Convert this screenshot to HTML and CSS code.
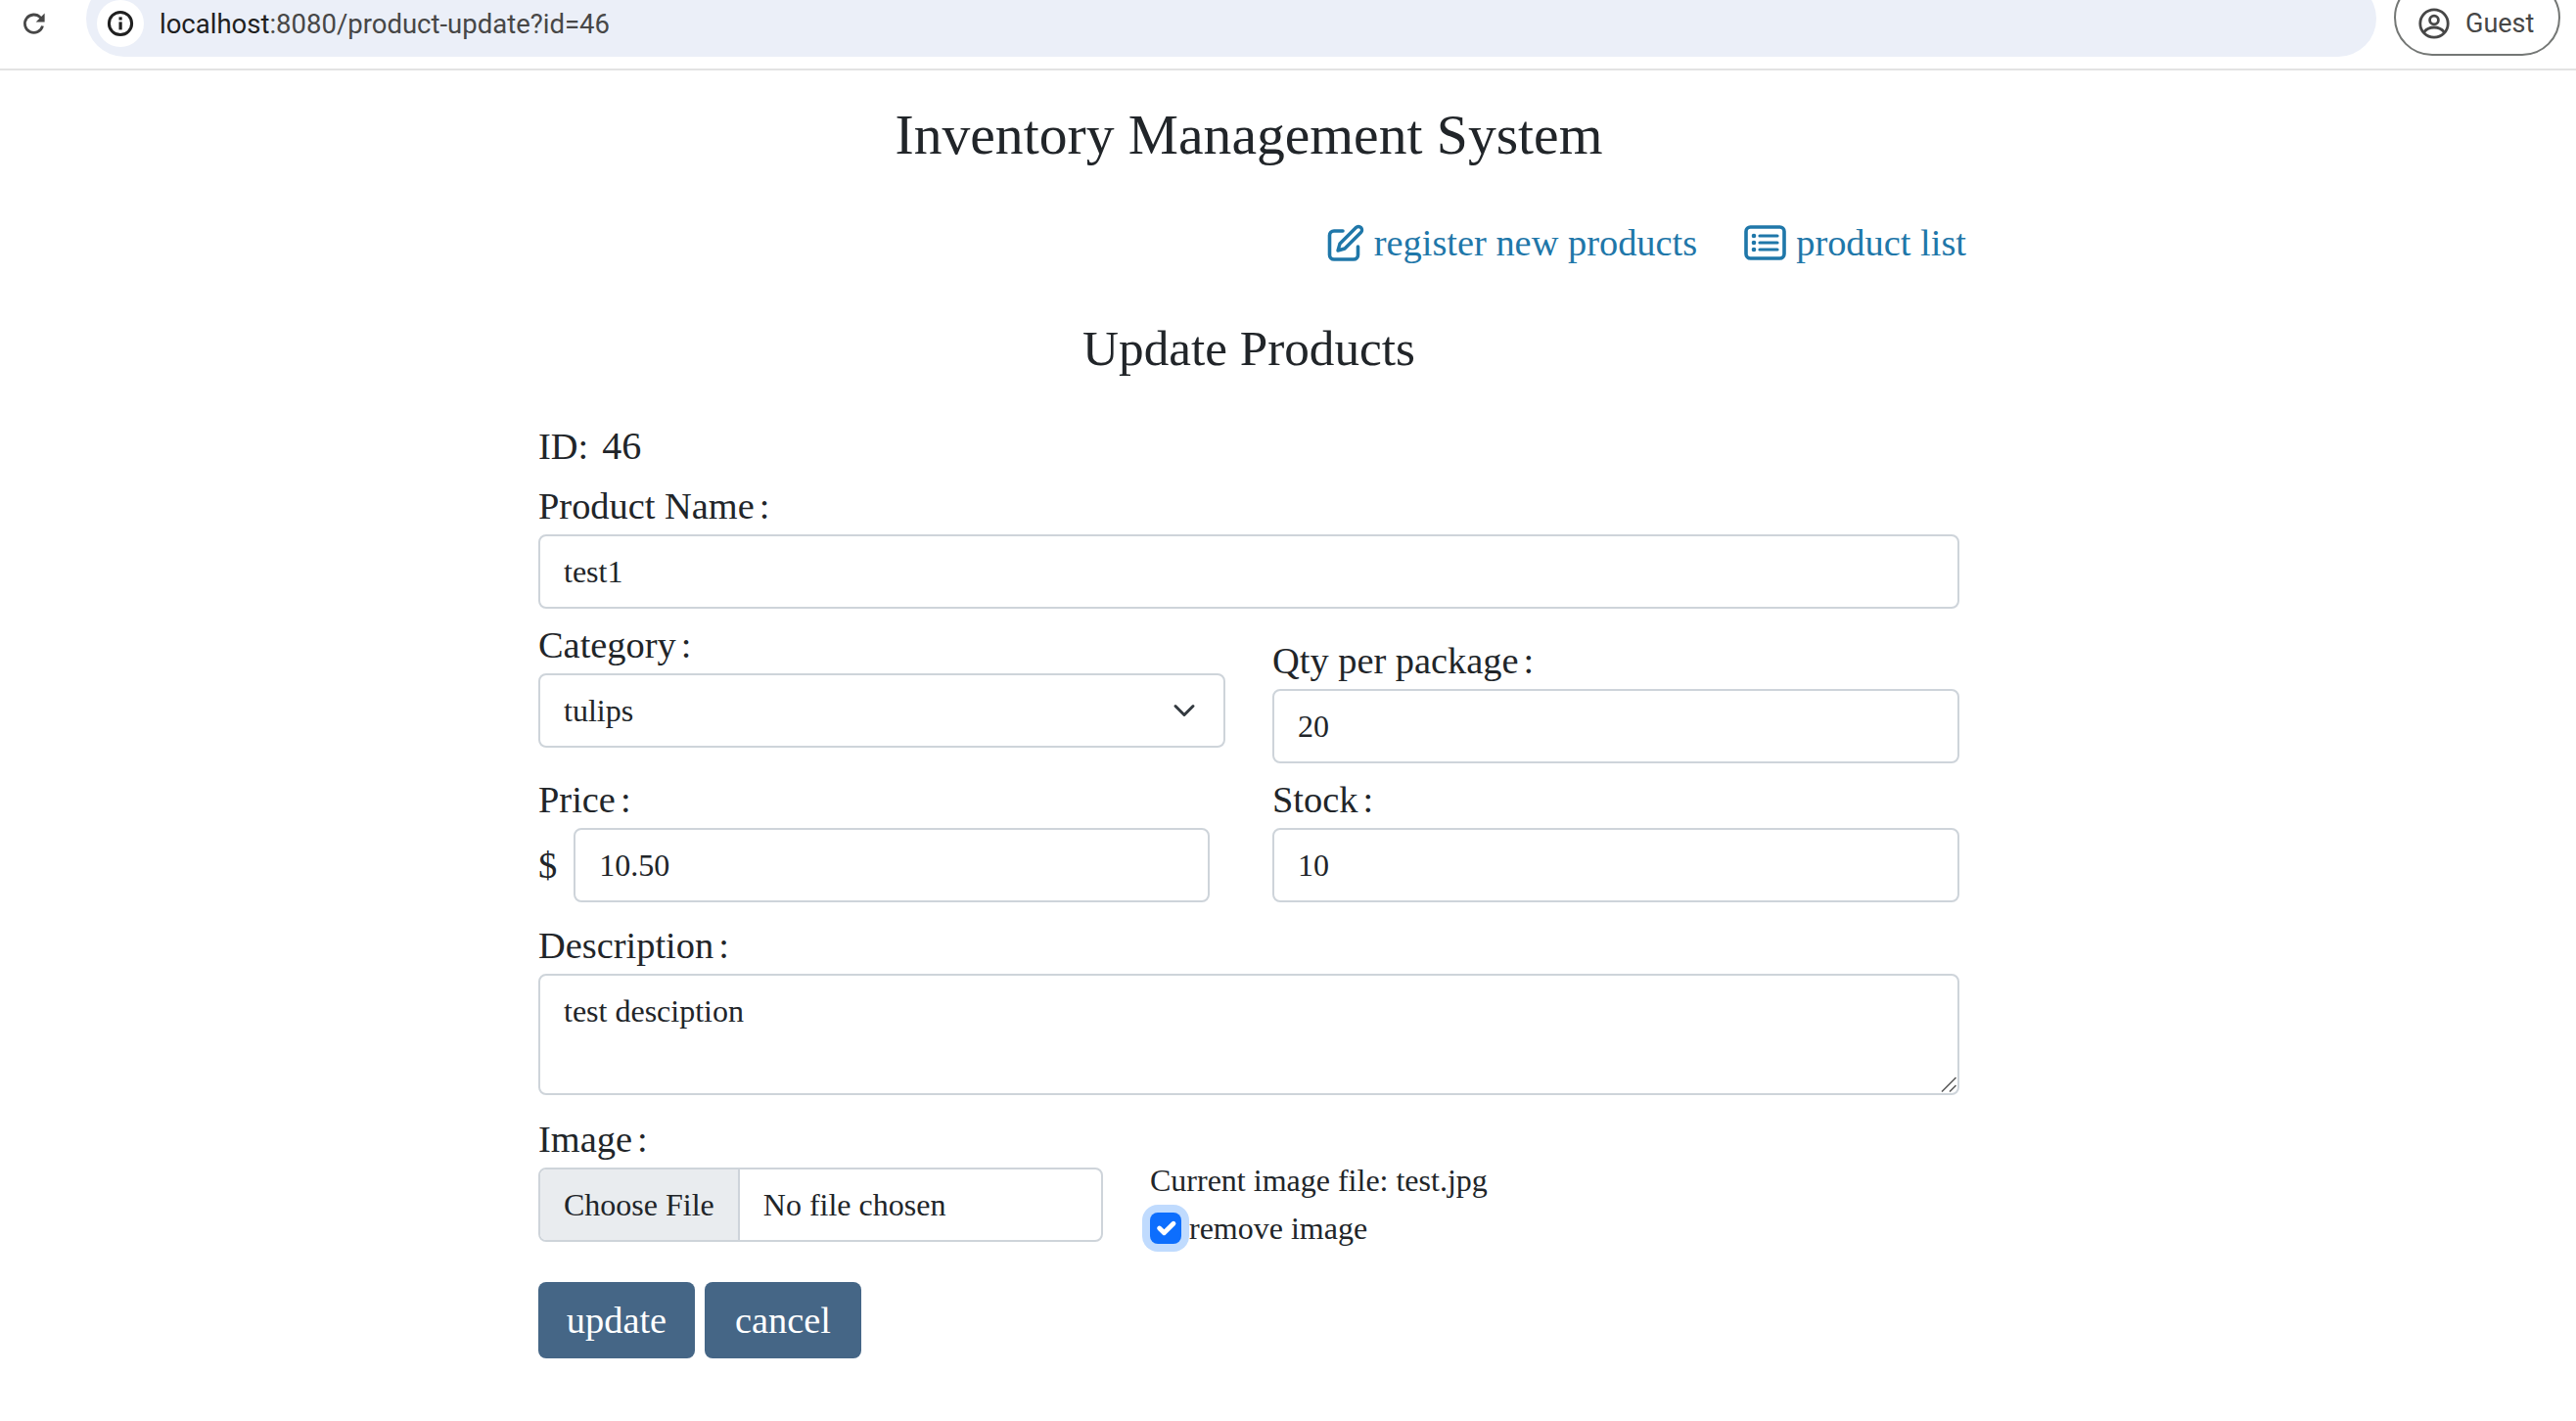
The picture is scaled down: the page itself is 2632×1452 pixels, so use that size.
FILE: index.html
```html
<!DOCTYPE html>
<html lang="en">
<head>
<meta charset="utf-8">
<title>Inventory Management System</title>
<link rel="stylesheet" href="styles.css">
</head>
<body>
<header class="chrome">
  <svg class="reload" viewBox="0 0 26 24" width="26" height="24" aria-hidden="true"><path d="M21.5 14.5a9.2 9.2 0 1 1-2.2-8.6L22 8.6" fill="none" stroke="#474747" stroke-width="2.8"/><path d="M23.6 1.6v9h-9z" fill="#474747"/></svg>
  <div class="omnibox">
    <span class="site-badge">
      <svg viewBox="0 0 28 28" width="28" height="28" aria-hidden="true"><circle cx="14" cy="14" r="11.6" fill="none" stroke="#1f1f1f" stroke-width="3"/><rect x="12.5" y="12.4" width="3.2" height="8" fill="#1f1f1f"/><rect x="12.5" y="7.4" width="3.2" height="3.1" fill="#1f1f1f"/></svg>
    </span>
    <span class="url"><span class="url-host">localhost</span>:8080/product-update?id=46</span>
  </div>
  <div class="guest">
    <svg viewBox="0 0 34 34" width="34" height="34" aria-hidden="true"><circle cx="17" cy="17" r="14.2" fill="none" stroke="#474747" stroke-width="2.8"/><circle cx="17" cy="13.5" r="4.4" fill="none" stroke="#474747" stroke-width="2.8"/><path d="M6.5 26c3-3.800 6.500-5 10.500-5s7.500 1.200 10.500 5" fill="none" stroke="#474747" stroke-width="2.8"/></svg>
    <span>Guest</span>
  </div>
</header>

<main class="container">
  <h1 class="title">Inventory Management System</h1>
  <nav class="links">
    <a class="link" href="#">
      <svg viewBox="0 0 38 38" width="38" height="38" aria-hidden="true"><path d="M16 7H7a4.500 4.500 0 0 0-4.500 4.500v20A4.500 4.500 0 0 0 7 36h20a4.500 4.500 0 0 0 4.500-4.500V23" fill="none" stroke="currentColor" stroke-width="3.600" stroke-linecap="round"/><path d="M29.500 3.500a3.500 3.500 0 0 1 5 0 3.500 3.500 0 0 1 0 5L18 25l-7 2 2-7z" fill="none" stroke="currentColor" stroke-width="3.400" stroke-linejoin="round"/></svg>
      <span>register new products</span>
    </a>
    <a class="link" href="#">
      <svg viewBox="0 0 43 36" width="43" height="36" aria-hidden="true"><rect x="2" y="2" width="39" height="32" rx="4.500" fill="none" stroke="currentColor" stroke-width="3.600"/><circle cx="10" cy="11" r="2.300" fill="currentColor"/><circle cx="10" cy="18" r="2.300" fill="currentColor"/><circle cx="10" cy="25" r="2.300" fill="currentColor"/><path d="M16 11h18M16 18h18M16 25h18" stroke="currentColor" stroke-width="3.200" stroke-linecap="round"/></svg>
      <span>product list</span>
    </a>
  </nav>
  <h2 class="subtitle">Update Products</h2>

  <form class="form">
    <p class="id-line">ID:<span class="id-value">46</span></p>

    <div class="field">
      <label class="label">Product Name<span class="colon">:</span></label>
      <input class="control" type="text" value="test1">
    </div>

    <div class="row row-spaced">
      <div class="field">
        <label class="label">Category<span class="colon">:</span></label>
        <select class="control select"><option>tulips</option></select>
      </div>
      <div class="field field-offset">
        <label class="label">Qty per package<span class="colon">:</span></label>
        <input class="control" type="text" value="20">
      </div>
    </div>

    <div class="row row-spaced">
      <div class="field">
        <label class="label">Price<span class="colon">:</span></label>
        <div class="price">
          <span class="dollar">$</span>
          <input class="control" type="text" value="10.50">
        </div>
      </div>
      <div class="field">
        <label class="label">Stock<span class="colon">:</span></label>
        <input class="control" type="text" value="10">
      </div>
    </div>

    <div class="field field-gap">
      <label class="label">Description<span class="colon">:</span></label>
      <textarea class="control textarea">test desciption</textarea>
    </div>

    <div class="image-row">
      <div class="field image-field">
        <label class="label">Image<span class="colon">:</span></label>
        <input class="control file" type="file">
      </div>
      <div class="current">
        <div class="current-line">Current image file: test.jpg</div>
        <label class="remove"><input class="check" type="checkbox" checked>remove image</label>
      </div>
    </div>

    <div class="actions">
      <button class="btn" type="button">update</button>
      <button class="btn" type="button">cancel</button>
    </div>
  </form>
</main>
</body>
</html>
```

FILE: styles.css
```css
* { box-sizing: border-box; }

html, body {
  margin: 0;
  padding: 0;
  background: #fff;
}

body {
  font-family: "Liberation Serif", "Times New Roman", serif;
  color: #212529;
  overflow: hidden;
}

/* browser toolbar */
.chrome {
  height: 72px;
  border-bottom: 2px solid #e3e3e3;
  display: flex;
  align-items: flex-start;
  padding-left: 22px;
  overflow: hidden;
  font-family: Roboto, Inter, sans-serif;
}

.reload {
  flex: none;
  margin-top: 12px;
}

.omnibox {
  flex: none;
  width: 2340px;
  height: 78px;
  margin: -20px 0 0 40px;
  padding: 10px 0 0 11px;
  border-radius: 39px;
  background: #ebeff8;
  display: flex;
  align-items: center;
  gap: 16px;
}

.site-badge {
  width: 48px;
  height: 48px;
  border-radius: 50%;
  background: #fff;
  display: flex;
  align-items: center;
  justify-content: center;
  flex: none;
}

.url {
  font-size: 27.5px;
  color: #474747;
  white-space: nowrap;
}

.url-host { color: #1f1f1f; }

.guest {
  flex: none;
  width: 170px;
  height: 78px;
  margin: -21px 0 0 18px;
  padding: 12px 0 0 22px;
  border: 2px solid #747775;
  border-radius: 39px;
  display: flex;
  align-items: center;
  gap: 15px;
  font-size: 27px;
  color: #474747;
}

/* page */
.container {
  width: 1452px;
  margin-left: 550px;
}

.title {
  margin: 32px 0 0;
  font-size: 57.6px;
  line-height: 68px;
  font-weight: 400;
  text-align: center;
}

.links {
  margin: 46px -7px 0 0;
  height: 60px;
  display: flex;
  justify-content: flex-end;
  align-items: center;
  gap: 48px;
}

.link {
  display: flex;
  align-items: center;
  gap: 10px;
  font-size: 38.4px;
  line-height: 60px;
  color: #1f77a9;
  text-decoration: none;
}

.subtitle {
  margin: 46px 0 0;
  font-size: 51.2px;
  line-height: 64px;
  font-weight: 400;
  text-align: center;
}

.form { margin-top: 46px; }

.id-line {
  margin: 0 0 17px;
  font-size: 38.4px;
  line-height: 44px;
}

.id-value {
  margin-left: 14px;
  font-size: 40px;
}

.field { display: flex; flex-direction: column; }

.label {
  font-size: 38.4px;
  line-height: 44px;
  margin-bottom: 7px;
  white-space: nowrap;
}

.colon { margin-left: 5px; }

.control {
  display: block;
  width: 100%;
  height: 76px;
  padding: 12px 24px;
  border: 2px solid #ced4da;
  border-radius: 8px;
  background: #fff;
  font-family: "Liberation Serif", "Times New Roman", serif;
  font-size: 32px;
  line-height: 48px;
  color: #212529;
  outline: none;
}

.row {
  display: grid;
  grid-template-columns: 702px 702px;
  column-gap: 48px;
}

.row-spaced { margin-top: 15px; }

.field-offset { padding-top: 16px; }

.select {
  appearance: none;
  -webkit-appearance: none;
  background-image: url("data:image/svg+xml,%3Csvg xmlns='http://www.w3.org/2000/svg' viewBox='0 0 16 16'%3E%3Cpath fill='none' stroke='%23343a40' stroke-linecap='round' stroke-linejoin='round' stroke-width='2' d='M2 5l6 6 6-6'/%3E%3C/svg%3E");
  background-repeat: no-repeat;
  background-position: right 24px center;
  background-size: 32px 24px;
}

.price {
  display: flex;
  align-items: center;
  gap: 17px;
  padding-right: 16px;
}

.dollar { font-size: 38.4px; flex: none; }

.field-gap { margin-top: 22px; }

.textarea {
  height: 124px;
  resize: none;
  background-image: url("data:image/svg+xml,%3Csvg xmlns='http://www.w3.org/2000/svg' viewBox='0 0 16 16'%3E%3Cpath fill='none' stroke='%23555' stroke-width='1.5' d='M1 15.500L15.500 1M9 15.500l6.500-6.500'/%3E%3C/svg%3E");
  background-repeat: no-repeat;
  background-position: right 1px bottom 1px;
  background-size: 16px 16px;
}

.image-row {
  margin-top: 23px;
  display: flex;
  align-items: flex-start;
  gap: 48px;
}

.image-field { width: 577px; flex: none; }

.file {
  padding: 0;
  overflow: hidden;
  line-height: 72px;
}

.file::file-selector-button {
  height: 72px;
  margin: 0 24px 0 0;
  padding: 0 24px;
  border: 0;
  border-right: 2px solid #ced4da;
  border-radius: 0;
  background: #e9ecef;
  color: #212529;
  font: inherit;
}

.current {
  margin-top: 40px;
  font-size: 32px;
  line-height: 48px;
}

.current-line { margin-bottom: 1px; }

.remove {
  display: flex;
  align-items: center;
  gap: 8px;
}

.check {
  appearance: none;
  -webkit-appearance: none;
  flex: none;
  width: 32px;
  height: 32px;
  margin: 0;
  border-radius: 8px;
  background-color: #0d6efd;
  box-shadow: 0 0 0 8px #c0dbfe;
  background-image: url("data:image/svg+xml,%3Csvg xmlns='http://www.w3.org/2000/svg' viewBox='0 0 20 20'%3E%3Cpath fill='none' stroke='%23fff' stroke-linecap='round' stroke-linejoin='round' stroke-width='3' d='M6 10l3 3 6-6'/%3E%3C/svg%3E");
  background-size: 100% 100%;
}

.actions {
  margin-top: 31px;
  display: flex;
  gap: 10px;
}

.btn {
  width: 160px;
  height: 78px;
  padding: 0;
  border: 0;
  border-radius: 8px;
  background: #456686;
  color: #fff;
  font-family: "Liberation Serif", "Times New Roman", serif;
  font-size: 38.4px;
}
```
